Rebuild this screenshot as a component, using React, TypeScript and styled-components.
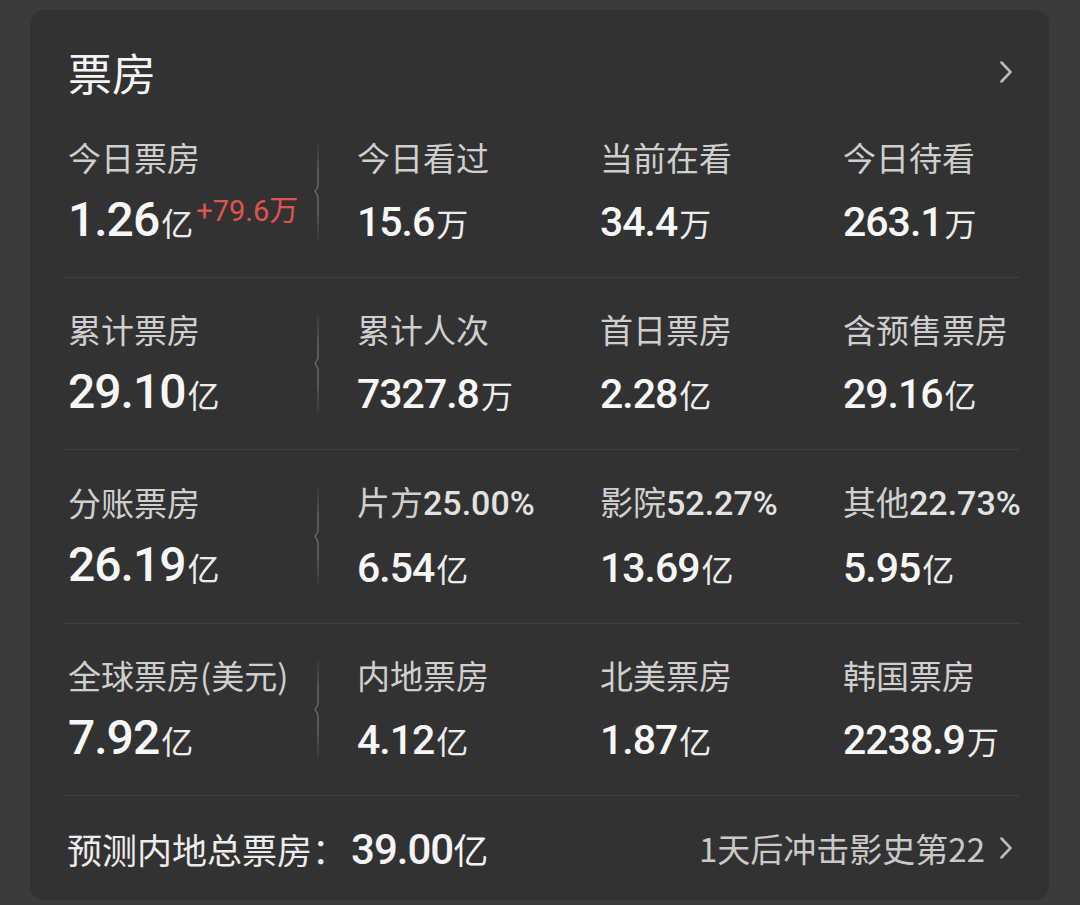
import React from "react";
import styled, { createGlobalStyle } from "styled-components";

type Stat = {
  label: string;
  labelNum?: string;
  value: string;
  unit: string;
  delta?: string;
};

const rows: Stat[][] = [
  [
    { label: "今日票房", value: "1.26", unit: "亿", delta: "+79.6万" },
    { label: "今日看过", value: "15.6", unit: "万" },
    { label: "当前在看", value: "34.4", unit: "万" },
    { label: "今日待看", value: "263.1", unit: "万" },
  ],
  [
    { label: "累计票房", value: "29.10", unit: "亿" },
    { label: "累计人次", value: "7327.8", unit: "万" },
    { label: "首日票房", value: "2.28", unit: "亿" },
    { label: "含预售票房", value: "29.16", unit: "亿" },
  ],
  [
    { label: "分账票房", value: "26.19", unit: "亿" },
    { label: "片方", labelNum: "25.00%", value: "6.54", unit: "亿" },
    { label: "影院", labelNum: "52.27%", value: "13.69", unit: "亿" },
    { label: "其他", labelNum: "22.73%", value: "5.95", unit: "亿" },
  ],
  [
    { label: "全球票房(美元)", value: "7.92", unit: "亿" },
    { label: "内地票房", value: "4.12", unit: "亿" },
    { label: "北美票房", value: "1.87", unit: "亿" },
    { label: "韩国票房", value: "2238.9", unit: "万" },
  ],
];

const Chevron = () => (
  <svg width="14" height="24" viewBox="0 0 14 24">
    <path
      d="M2.5 2.5 L11.5 12 L2.5 21.5"
      fill="none"
      stroke="#b9b9b9"
      strokeWidth="2.6"
      strokeLinecap="round"
      strokeLinejoin="round"
    />
  </svg>
);

const Divider = () => (
  <svg width="10" height="98" viewBox="0 0 10 98">
    <defs>
      <linearGradient id="fade" x1="0" y1="0" x2="0" y2="1">
        <stop offset="0" stopColor="#5e5e5e" stopOpacity="0.2" />
        <stop offset="0.3" stopColor="#6a6a6a" />
        <stop offset="0.7" stopColor="#6a6a6a" />
        <stop offset="1" stopColor="#5e5e5e" stopOpacity="0.2" />
      </linearGradient>
    </defs>
    <path
      d="M7 0 V42 Q7 45 4.5 47.5 Q4 48.5 4.5 49.5 Q7 52 7 55 V98"
      fill="none"
      stroke="url(#fade)"
      strokeWidth="1.4"
    />
  </svg>
);

const StatCell: React.FC<{ stat: Stat; lead?: boolean }> = ({ stat, lead }) => (
  <Cell $lead={lead}>
    <StatBody>
      <Label>
        {stat.label}
        {stat.labelNum && <LabelNum>{stat.labelNum}</LabelNum>}
      </Label>
      <Value>
        <Digits $lead={lead}>{stat.value}</Digits>
        <Unit>{stat.unit}</Unit>
        {stat.delta && <Delta>{stat.delta}</Delta>}
      </Value>
    </StatBody>
    {lead && <Divider />}
  </Cell>
);

const App: React.FC = () => {
  return (
    <>
      <GlobalStyle />
      <Card>
        <Header>
          <Title>票房</Title>
          <Chevron />
        </Header>
        <Grid>
          {rows.map((row, i) => (
            <Row key={i}>
              {row.map((stat, j) => (
                <StatCell key={stat.label} stat={stat} lead={j === 0} />
              ))}
            </Row>
          ))}
        </Grid>
        <Footer>
          <Forecast>
            预测内地总票房：
            <ForecastValue>
              <ForecastDigits>39.00</ForecastDigits>亿
            </ForecastValue>
          </Forecast>
          <Rank>
            1天后冲击影史第22
            <Chevron />
          </Rank>
        </Footer>
      </Card>
    </>
  );
};

const GlobalStyle = createGlobalStyle`
  html, body {
    margin: 0;
    padding: 0;
    background: #3b3b3b;
  }
  body {
    font-family: Roboto, "Noto Sans CJK SC", sans-serif;
    -webkit-font-smoothing: antialiased;
  }
`;

const Card = styled.div`
  margin: 10px 31px 0 30px;
  background: #323232;
  border-radius: 14px;
  color: #f4f4f4;
  overflow: hidden;
`;

const Header = styled.header`
  display: flex;
  align-items: center;
  justify-content: space-between;
  height: 50px;
  padding: 37px 36px 9px 38px;
`;

const Title = styled.h1`
  margin: 0;
  font-family: "Noto Sans CJK SC", sans-serif;
  font-size: 44px;
  font-weight: 400;
  line-height: 50px;
  color: #f4f4f4;
`;

const Grid = styled.div`
  margin: 0 29px 0 35px;
`;

const Row = styled.div`
  display: grid;
  grid-template-columns: 289px 243px 243px 1fr;
  padding: 29px 0 29px 3px;
  border-bottom: 1px solid #414141;
`;

const Cell = styled.div<{ $lead?: boolean }>`
  display: flex;
  align-items: center;
  justify-content: space-between;
  padding-right: ${(p) => (p.$lead ? "36px" : "0")};
  white-space: nowrap;
`;

const StatBody = styled.div`
  display: flex;
  flex-direction: column;
  gap: 13px;
`;

const Label = styled.div`
  font-family: "Noto Sans CJK SC", sans-serif;
  font-size: 33px;
  line-height: 44px;
  color: #cfcfcf;
`;

const LabelNum = styled.span`
  font-family: Roboto, sans-serif;
  font-size: 34px;
  font-weight: 500;
  color: #e2e2e2;
`;

/* the strut fixes one baseline for every column of a row */
const Value = styled.div`
  height: 56px;
  font-family: Roboto, sans-serif;
  font-size: 48px;
  line-height: 56px;
  white-space: nowrap;
`;

const Digits = styled.span<{ $lead?: boolean }>`
  font-size: ${(p) => (p.$lead ? "48px" : "41px")};
  letter-spacing: ${(p) => (p.$lead ? "-1px" : "-1px")};
  font-weight: 500;
  line-height: 1;
  color: #f7f7f7;
`;

const Unit = styled.span`
  font-family: "Noto Sans CJK SC", sans-serif;
  font-size: 32px;
  line-height: 1;
  color: #ececec;
  margin-left: 2px;
`;

const Delta = styled.span`
  vertical-align: 15px;
  margin-left: 3px;
  font-family: Roboto, "Noto Sans CJK SC", sans-serif;
  font-size: 29px;
  line-height: 1;
  color: #e0544f;
`;

const Footer = styled.footer`
  display: flex;
  align-items: center;
  justify-content: space-between;
  height: 104px;
  padding: 0 36px 0 37px;
`;

const Forecast = styled.div`
  display: flex;
  align-items: baseline;
  font-family: "Noto Sans CJK SC", sans-serif;
  font-size: 35px;
  color: #ececec;
`;

const ForecastValue = styled.span`
  margin-left: 4px;
  color: #f4f4f4;
`;

const ForecastDigits = styled.span`
  font-family: Roboto, sans-serif;
  font-size: 42px;
  font-weight: 500;
  letter-spacing: -1px;
`;

const Rank = styled.div`
  display: flex;
  align-items: center;
  gap: 14px;
  font-family: "Noto Sans CJK SC", sans-serif;
  font-size: 33px;
  color: #c9c9c9;
`;

export default App;
